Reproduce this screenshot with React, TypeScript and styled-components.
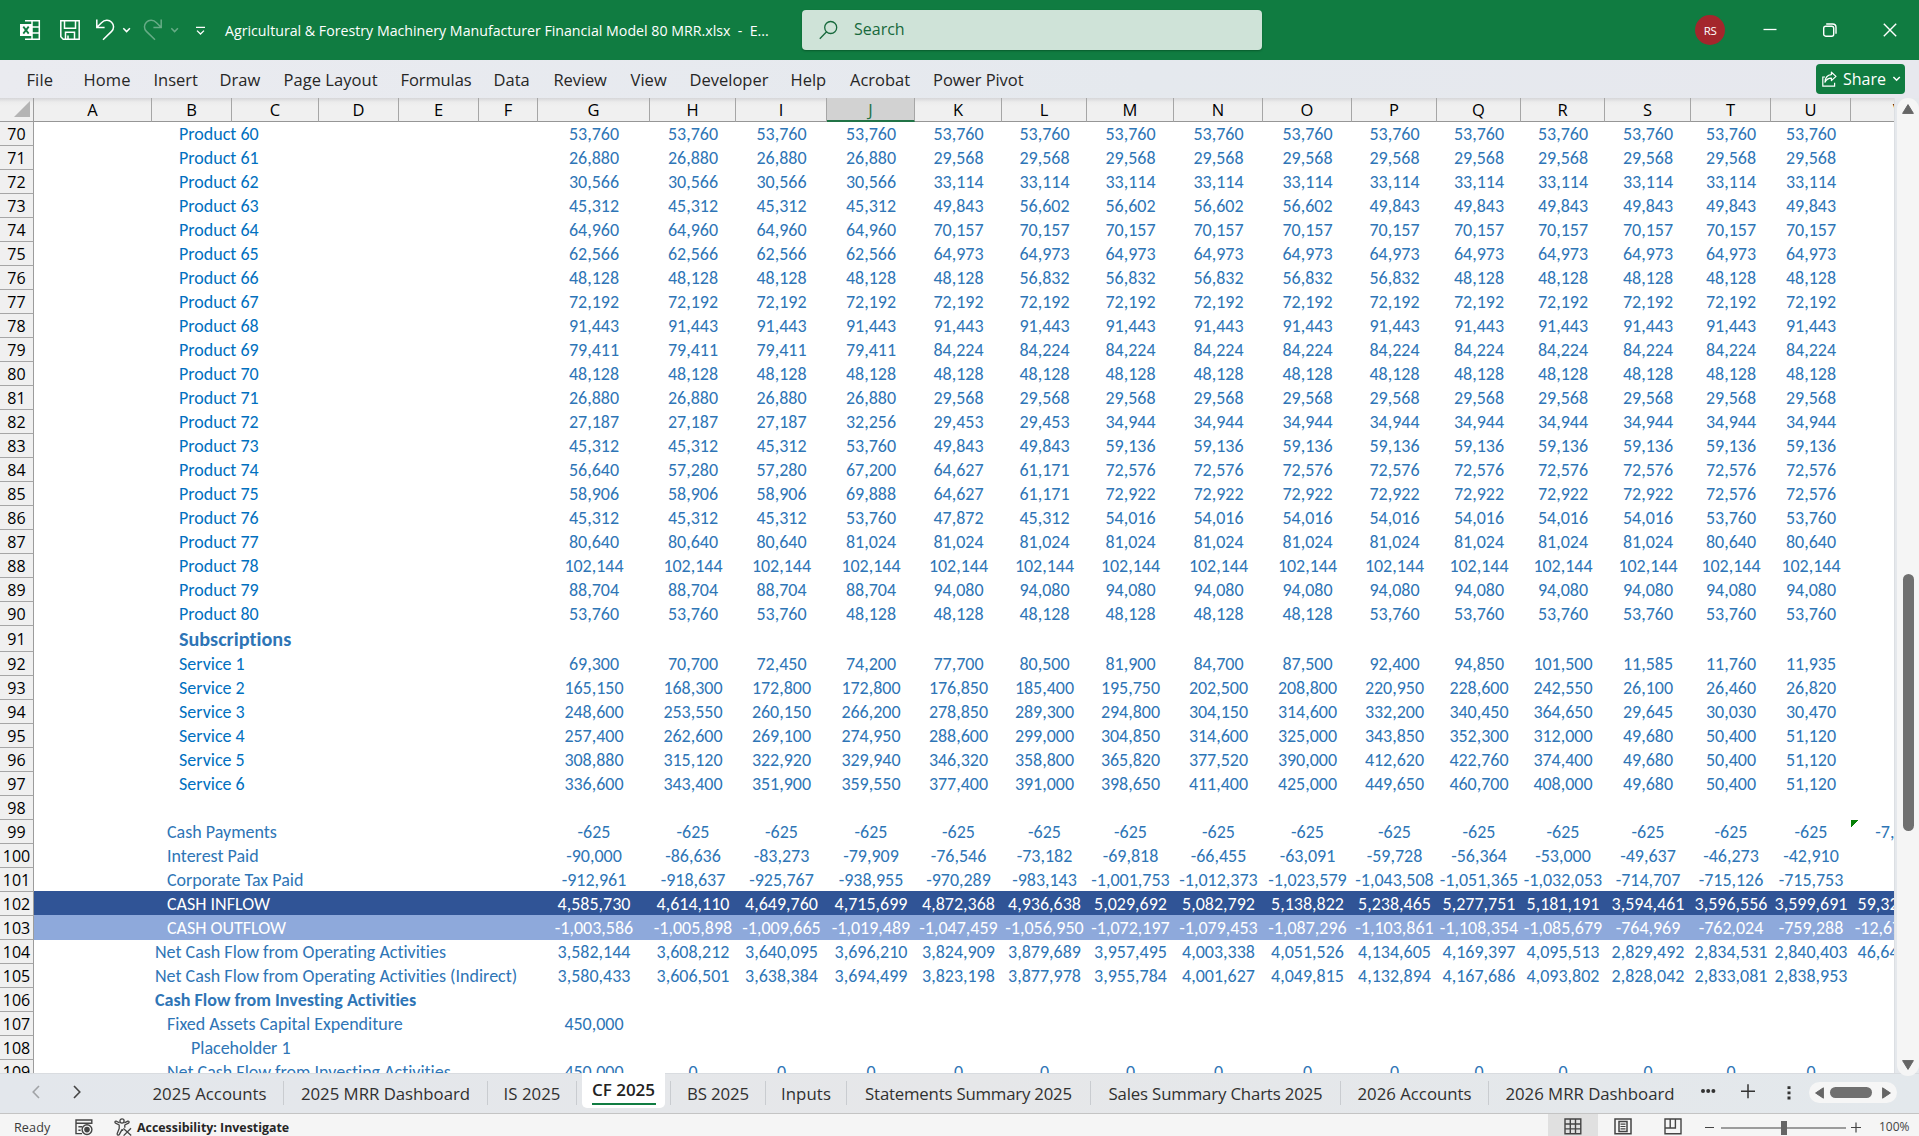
import React from 'react';
import styled, { createGlobalStyle, css } from 'styled-components';

const UI = `"Open Sans", "Noto Sans", sans-serif`;
const CELL = `Calibri, Carlito, Lato, sans-serif`;
const GREEN = '#107c41';

const Global = createGlobalStyle`
  * { box-sizing: border-box; }
  body { margin: 0; font-family: ${UI}; background: #fff; overflow: hidden; }
`;

/* ---------- data ---------- */

const COLUMNS: [string, number][] = [
  ['A', 118], ['B', 80], ['C', 87], ['D', 80], ['E', 80], ['F', 59], ['G', 112], ['H', 86],
  ['I', 91], ['J', 88], ['K', 87], ['L', 85], ['M', 87], ['N', 89], ['O', 89], ['P', 85],
  ['Q', 84], ['R', 84], ['S', 86], ['T', 80], ['U', 80], ['V', 95],
];
const LABEL_WIDTH = 504;
const VALUE_TEMPLATE = COLUMNS.slice(6).map(([, w]) => `${w}px`).join(' ');

type Tone = 'item' | 'line' | 'heading' | 'strong' | 'inflow' | 'outflow';
interface SheetRow { n: number; label: string; indent: number; tone: Tone; values: string[] }

const row = (n: number, label: string, indent: number, tone: Tone, values = ''): SheetRow => ({
  n, label, indent, tone, values: values ? values.split(' ') : [],
});
const same = (v: string, times = 15) => Array(times).fill(v).join(' ');

const PRODUCTS = [
  same('53,760'),
  `${same('26,880', 4)} ${same('29,568', 11)}`,
  `${same('30,566', 4)} ${same('33,114', 11)}`,
  `${same('45,312', 4)} 49,843 ${same('56,602', 4)} ${same('49,843', 6)}`,
  `${same('64,960', 4)} ${same('70,157', 11)}`,
  `${same('62,566', 4)} ${same('64,973', 11)}`,
  `${same('48,128', 5)} ${same('56,832', 5)} ${same('48,128', 5)}`,
  same('72,192'),
  same('91,443'),
  `${same('79,411', 4)} ${same('84,224', 11)}`,
  same('48,128'),
  `${same('26,880', 4)} ${same('29,568', 11)}`,
  `${same('27,187', 3)} 32,256 ${same('29,453', 2)} ${same('34,944', 9)}`,
  `${same('45,312', 3)} 53,760 ${same('49,843', 2)} ${same('59,136', 9)}`,
  `56,640 57,280 57,280 67,200 64,627 61,171 ${same('72,576', 9)}`,
  `${same('58,906', 3)} 69,888 64,627 61,171 ${same('72,922', 7)} ${same('72,576', 2)}`,
  `${same('45,312', 3)} 53,760 47,872 45,312 ${same('54,016', 7)} ${same('53,760', 2)}`,
  `${same('80,640', 3)} ${same('81,024', 10)} ${same('80,640', 2)}`,
  same('102,144'),
  `${same('88,704', 4)} ${same('94,080', 11)}`,
  `${same('53,760', 3)} ${same('48,128', 6)} ${same('53,760', 6)}`,
];

const SERVICES = [
  '69,300 70,700 72,450 74,200 77,700 80,500 81,900 84,700 87,500 92,400 94,850 101,500 11,585 11,760 11,935',
  '165,150 168,300 172,800 172,800 176,850 185,400 195,750 202,500 208,800 220,950 228,600 242,550 26,100 26,460 26,820',
  '248,600 253,550 260,150 266,200 278,850 289,300 294,800 304,150 314,600 332,200 340,450 364,650 29,645 30,030 30,470',
  '257,400 262,600 269,100 274,950 288,600 299,000 304,850 314,600 325,000 343,850 352,300 312,000 49,680 50,400 51,120',
  '308,880 315,120 322,920 329,940 346,320 358,800 365,820 377,520 390,000 412,620 422,760 374,400 49,680 50,400 51,120',
  '336,600 343,400 351,900 359,550 377,400 391,000 398,650 411,400 425,000 449,650 460,700 408,000 49,680 50,400 51,120',
];

const ROWS: SheetRow[] = [
  ...PRODUCTS.map((v, i) => row(70 + i, `Product ${60 + i}`, 27, 'item', v)),
  row(91, 'Subscriptions', 27, 'heading'),
  ...SERVICES.map((v, i) => row(92 + i, `Service ${i + 1}`, 27, 'item', v)),
  row(98, '', 0, 'line'),
  row(99, 'Cash Payments', 15, 'line', `${same('-625')} -7,500`),
  row(100, 'Interest Paid', 15, 'line', '-90,000 -86,636 -83,273 -79,909 -76,546 -73,182 -69,818 -66,455 -63,091 -59,728 -56,364 -53,000 -49,637 -46,273 -42,910'),
  row(101, 'Corporate Tax Paid', 15, 'line', '-912,961 -918,637 -925,767 -938,955 -970,289 -983,143 -1,001,753 -1,012,373 -1,023,579 -1,043,508 -1,051,365 -1,032,053 -714,707 -715,126 -715,753'),
  row(102, 'CASH INFLOW', 15, 'inflow', '4,585,730 4,614,110 4,649,760 4,715,699 4,872,368 4,936,638 5,029,692 5,082,792 5,138,822 5,238,465 5,277,751 5,181,191 3,594,461 3,596,556 3,599,691 59,323,018'),
  row(103, 'CASH OUTFLOW', 15, 'outflow', '-1,003,586 -1,005,898 -1,009,665 -1,019,489 -1,047,459 -1,056,950 -1,072,197 -1,079,453 -1,087,296 -1,103,861 -1,108,354 -1,085,679 -764,969 -762,024 -759,288 -12,679,887'),
  row(104, 'Net Cash Flow from Operating Activities', 3, 'line', '3,582,144 3,608,212 3,640,095 3,696,210 3,824,909 3,879,689 3,957,495 4,003,338 4,051,526 4,134,605 4,169,397 4,095,513 2,829,492 2,834,531 2,840,403 46,643,131'),
  row(105, 'Net Cash Flow from Operating Activities (Indirect)', 3, 'line', '3,580,433 3,606,501 3,638,384 3,694,499 3,823,198 3,877,978 3,955,784 4,001,627 4,049,815 4,132,894 4,167,686 4,093,802 2,828,042 2,833,081 2,838,953'),
  row(106, 'Cash Flow from Investing Activities', 3, 'strong'),
  row(107, 'Fixed Assets Capital Expenditure', 15, 'line', '450,000'),
  row(108, 'Placeholder 1', 39, 'line'),
  row(109, 'Net Cash Flow from Investing Activities', 15, 'line', `450,000 ${same('0', 14)}`),
];

/* label, slot width, letter spacing */
const MENU: [string, number, number][] = [
  ['File', 57, 0.1], ['Home', 70, 0.1], ['Insert', 66, 0], ['Draw', 64, 0], ['Page Layout', 117, 0.05],
  ['Formulas', 93, -0.1], ['Data', 60, 0], ['Review', 77, -0.1], ['View', 59, 0.05], ['Developer', 101, 0],
  ['Help', 59.5, 0], ['Acrobat', 83, 0], ['Power Pivot', 100, -0.05],
];

/* label, slot width including its right-hand divider, letter spacing */
const TABS_BEFORE: [string, number, number][] = [
  ['2025 Accounts', 148, 0], ['2025 MRR Dashboard', 204, -0.02], ['IS 2025', 89, 0.05],
];
const TABS_AFTER: [string, number, number][] = [
  ['BS 2025', 95, -0.1], ['Inputs', 81, 0.1], ['Statements Summary 2025', 244, -0.2],
  ['Sales Summary Charts 2025', 250, -0.15], ['2026 Accounts', 148, 0], ['2026 MRR Dashboard', 203, -0.02],
];

/* ---------- title bar ---------- */

const Window = styled.div`
  width: 1919px;
  height: 1136px;
  display: flex;
  flex-direction: column;
  overflow: hidden;
`;
const TitleBar = styled.header`
  height: 60px;
  flex: none;
  display: flex;
  align-items: center;
  background: ${GREEN};
  color: #fff;
`;
const QuickAccess = styled.div`
  width: 225px;
  height: 100%;
`;
const DocTitle = styled.div`
  width: 577px;
  font-size: 14.2px;
  line-height: 20px;
  white-space: pre;
  padding-top: 1px;
`;
const SearchBox = styled.div`
  width: 460px;
  height: 40px;
  border-radius: 4px;
  background: #cfe3d8;
  color: #17693c;
  display: flex;
  align-items: center;
  gap: 16px;
  padding: 0 0 1px 17px;
  font-size: 16px;
  line-height: 22px;
  box-shadow: 0 1px 2px rgba(0, 50, 20, 0.45);
`;
const SearchLabel = styled.span`
  padding-bottom: 1px;
`;
const Avatar = styled.div`
  width: 30px;
  height: 30px;
  border-radius: 50%;
  margin-left: 433px;
  background: #a4262c;
  display: grid;
  place-items: center;
  font-size: 11.5px;
  letter-spacing: -0.4px;
`;
const WindowButtons = styled.div`
  display: flex;
  align-items: center;
  gap: 44px;
  margin-left: 37px;
`;

/* ---------- ribbon tabs ---------- */

const MenuBar = styled.nav`
  height: 38px;
  flex: none;
  display: flex;
  align-items: center;
  padding: 0 14px 0 26.5px;
  background: linear-gradient(90deg, #eaebf0, #e5e9ee 60%, #e7e8ee);
`;
const MenuItem = styled.span<{ $w: number; $ls: number }>`
  width: ${(p) => p.$w}px;
  white-space: nowrap;
  font-size: 16.5px;
  line-height: 22px;
  padding-top: 1px;
  letter-spacing: ${(p) => p.$ls}px;
  color: #262626;
`;
const ShareButton = styled.div`
  margin: 0 0 0 auto;
  width: 89px;
  height: 30px;
  border-radius: 4px;
  background: ${GREEN};
  color: #fff;
  display: flex;
  align-items: center;
  padding-left: 6px;
  font-size: 16px;
  line-height: 22px;
  gap: 6px;
`;

/* ---------- sheet ---------- */

const SheetArea = styled.main`
  height: 975px;
  flex: none;
  display: flex;
  background: #e5e8ec;
`;
const Sheet = styled.section`
  width: 1895px;
  overflow: hidden;
  background: #fff;
  border-right: 1px solid #dcdfe3;
`;
const HeaderRow = styled.div`
  display: flex;
  width: 1950px;
  height: 24px;
  background: linear-gradient(#d6d6d8, #ececec 4px, #f0f0f0 8px);
`;
const Corner = styled.div`
  width: 34px;
  flex: none;
  border-right: 1px solid #9c9c9c;
  border-bottom: 1px solid #9c9c9c;
  display: flex;
  align-items: flex-end;
  justify-content: flex-end;
  padding: 0 3px 4px 0;
`;
const ColumnHeader = styled.div<{ $w: number; $active?: boolean }>`
  width: ${(p) => p.$w}px;
  flex: none;
  text-align: center;
  font-size: 16.5px;
  line-height: 24px;
  color: #000;
  border-right: 1px solid #a6a6a6;
  border-bottom: 1px solid #969696;
  ${(p) => p.$active && css`
    background: #d2d2d2;
    color: #217346;
    border-bottom: 2px solid #217346;
  `}
`;
const Line = styled.div<{ $tall: boolean }>`
  display: flex;
  width: 1950px;
  height: ${(p) => (p.$tall ? 26 : 24)}px;
  line-height: ${(p) => (p.$tall ? 26 : 24)}px;
`;
const RowNumber = styled.div`
  width: 34px;
  flex: none;
  background: #f0f0f0;
  border-right: 1px solid #9c9c9c;
  border-bottom: 1px solid #a6a6a6;
  text-align: center;
  font-size: 16px;
  color: #000;
`;
const TONES: Record<Tone, ReturnType<typeof css>> = {
  item: css`color: #2e75b6;`,
  line: css`color: #2e75b6;`,
  heading: css`color: #2e75b6; font-weight: 700; font-size: 20.2px; line-height: 27px;`,
  strong: css`color: #2e75b6; font-weight: 700; font-size: 18.1px;`,
  inflow: css`color: #fff; background: #305496; box-shadow: 0 -1px #305496;`,
  outflow: css`color: #fff; background: #8ea9db; box-shadow: 0 -1px #8ea9db;`,
};
const Cells = styled.div<{ $tone: Tone }>`
  display: flex;
  font-family: ${CELL};
  font-size: 18px;
  line-height: 25px;
  font-variant-ligatures: none;
  white-space: nowrap;
  ${(p) => TONES[p.$tone]}
`;
const Label = styled.div<{ $indent: number; $item: boolean }>`
  width: ${LABEL_WIDTH}px;
  padding-left: ${(p) => 118 + p.$indent}px;
  ${(p) => p.$item && css`color: #0070c0;`}
`;
const Values = styled.div`
  display: grid;
  grid-template-columns: ${VALUE_TEMPLATE};
`;
const Value = styled.div`
  display: flex;
  justify-content: center;
  min-width: 0;
`;
const FlaggedValue = styled(Value)`
  background: linear-gradient(135deg, #078007 5px, transparent 5px) no-repeat 0 0;
`;

const VScroll = styled.div`
  margin-left: 2px;
  width: 22px;
  height: 978px;
  border-radius: 11px;
  background: #f5f5f5;
  display: flex;
  flex-direction: column;
  align-items: center;
  padding: 6px 0;
  position: relative;
`;
const VThumb = styled.div`
  width: 11px;
  height: 257px;
  margin: 460px 0 auto;
  border-radius: 5.5px;
  background: #707070;
`;

/* ---------- sheet tabs ---------- */

const TabBar = styled.div`
  height: 41px;
  flex: none;
  display: flex;
  background: linear-gradient(90deg, #e3e7ec, #e6e7e9 50%, #e3e8ec);
  border-bottom: 1px solid #c4c4c4;
  border-top: 1px solid #d9dce0;
`;
const TabNav = styled.div`
  width: 136px;
  display: flex;
  align-items: center;
  gap: 33px;
  padding: 0 0 3px 31.5px;
`;
const Tab = styled.div<{ $w: number; $ls: number; $last?: boolean }>`
  width: ${(p) => p.$w}px;
  height: 24px;
  margin-top: 7px;
  flex: none;
  text-align: center;
  white-space: nowrap;
  font-size: 16.8px;
  line-height: 25px;
  letter-spacing: ${(p) => p.$ls}px;
  color: #303030;
  border-right: 1px solid ${(p) => (p.$last ? 'transparent' : '#c9ccd0')};
`;
const ActiveTab = styled.div`
  width: 83px;
  height: 35px;
  margin: -1px 5px 0;
  flex: none;
  border-radius: 0 0 5px 5px;
  background: #fff;
  display: flex;
  flex-direction: column;
  align-items: center;
  font-size: 17px;
  font-weight: 600;
  line-height: 24px;
  padding-top: 5px;
  color: #222;
`;
const Underline = styled.div`
  width: 64px;
  height: 2px;
  margin-top: 1px;
  background: ${GREEN};
`;
const TabTools = styled.div`
  display: flex;
  align-items: center;
  padding: 0 0 3px 9px;
`;
const HScroll = styled.div`
  width: 88px;
  height: 21px;
  margin: 1px 0 0 12px;
  border-radius: 11px;
  background: #f6f6f6;
  display: flex;
  align-items: center;
  justify-content: space-between;
  padding: 0 6px;
`;
const HThumb = styled.div`
  width: 42px;
  height: 11px;
  margin-right: 4px;
  border-radius: 5.5px;
  background: #707070;
`;

/* ---------- status bar ---------- */

const StatusBar = styled.footer`
  height: 22px;
  flex: none;
  display: flex;
  align-items: center;
  background: #f5f5f5;
  color: #3a3a3a;
  font-size: 12.6px;
  line-height: 16px;
  padding-top: 5px;
`;
const Ready = styled.span`
  width: 61px;
  margin-left: 14px;
  letter-spacing: 0.1px;
`;
const AccessText = styled.span`
  margin-left: 4px;
  font-size: 12.4px;
  font-weight: 700;
  color: #262626;
`;
const ViewButtons = styled.div`
  display: flex;
  height: 22px;
  margin: -5px 0 0 auto;
`;
const ViewButton = styled.div<{ $active?: boolean }>`
  width: 50px;
  display: grid;
  place-items: center;
  padding-top: 2px;
  background: ${(p) => (p.$active ? '#e0e0e0' : 'transparent')};
`;
const Zoom = styled.div`
  display: flex;
  align-items: center;
  margin: -5px 0 0 6px;
  height: 22px;
  padding-top: 3px;
`;
const Percent = styled.span`
  width: 40px;
  margin-left: 18px;
  padding-top: 1px;
  font-size: 12px;
  color: #444;
`;

/* ---------- icons ---------- */

const QuickIcons = () => (
  <svg width="225" height="60" fill="none" stroke="#fff" strokeWidth="1.5">
    <path d="M25 20.8H39.3V39.2H25M25 26.9H39M25 33.1H39M32 20.8V39.2" />
    <rect x="20" y="24" width="12" height="12" fill="#fff" stroke="none" />
    <path d="M23.3 26.6 28.7 33.6M28.7 26.6 23.3 33.6" stroke={GREEN} strokeWidth="1.8" />
    <path d="M60.8 20.8H79.2V39.2H63.2L60.8 36.8ZM64.5 20.8V28.2H75.5V20.8M65.5 39.2V32.2H74.5V39.2M68 35.5V39" />
    <path d="M96.8 19.6V27.4H104.6M97.2 27 101.5 22.7C104.5 19.7 109 19.6 111.6 22.2S114.2 28.8 111.6 31.4L103 39.8" />
    <path d="M123.3 28.2 126.6 31.6 129.9 28.2" />
    <g opacity="0.36">
      <path d="M161.2 19.6V27.4H153.4M160.8 27 156.5 22.7C153.5 19.7 149 19.6 146.4 22.2S143.8 28.8 146.4 31.4L155 39.8" />
      <path d="M171.3 28.2 174.6 31.6 177.9 28.2" />
    </g>
    <path d="M196 27.3H205M197 30.6 200.5 34 204 30.6" strokeWidth="1.3" />
  </svg>
);

const SearchIcon = () => (
  <svg width="19" height="20" fill="none" stroke="#17693c" strokeWidth="1.3">
    <circle cx="11.7" cy="7.5" r="6" />
    <path d="M7.6 11.8 0.8 18.8" />
  </svg>
);

const ShareIcon = () => (
  <svg width="15" height="16" fill="none" stroke="#fff" strokeWidth="1.2">
    <path d="M3 6H0.8V15.2H12.6V11.8" />
    <path d="M9.4 1.2 14 5.4 9.4 9.6V7.2C6.6 7.1 4.4 8.6 3 11.2 3.2 7 5.6 3.8 9.4 3.6Z" strokeLinejoin="round" />
  </svg>
);

const MacroIcon = () => (
  <svg width="19" height="17" fill="none" stroke="#444" strokeWidth="1.4">
    <path d="M16.8 5V1H1V14.6H7M1 4.2H16.8M3.4 7.8H7.4M3.4 11.2H5.6" />
    <circle cx="12" cy="10.6" r="4.9" />
    <circle cx="12" cy="10.6" r="2.1" fill="#444" />
  </svg>
);

const AccessIcon = () => (
  <svg width="19" height="19" fill="none" stroke="#444" strokeWidth="1.3" strokeLinejoin="round">
    <circle cx="8" cy="3" r="2.1" />
    <path d="M5.6 4.9 2.4 3.2C1 2.8 0.4 4.4 1.6 5.2L5.2 7V10.4L3.2 15.6C3 17.4 4.8 17.6 5.4 16.4L8 11.6 9.2 12.6M10.4 4.9 13.8 3.2C15.2 2.8 15.6 4.4 14.4 5.2L10.8 7V9.8" />
    <path d="M9.4 10.4 17.2 17.4M17 10.2 9.6 17.6" />
  </svg>
);

const GridIcon = () => (
  <svg width="18" height="17" fill="none" stroke="#444" strokeWidth="1.4">
    <path d="M1 1H16.8V15.8H1ZM1 6H16.8M1 10.9H16.8M6.3 1V15.8M11.5 1V15.8" />
  </svg>
);
const PageIcon = () => (
  <svg width="18" height="17" fill="none" stroke="#444" strokeWidth="1.5">
    <path d="M1 1H17V15.8H1ZM5 3.6H13V13.4H5Z" />
    <path d="M6.5 6.1H11.5M6.5 8.5H11.5M6.5 10.9H11.5" strokeWidth="1.2" />
  </svg>
);
const BreakIcon = () => (
  <svg width="18" height="17" fill="none" stroke="#444" strokeWidth="1.4">
    <path d="M1 1H17V15.8H1ZM6.2 1V10M11.4 1V10H1" />
  </svg>
);

export default function App() {
  return (
    <>
      <Global />
      <Window>
        <TitleBar>
          <QuickAccess><QuickIcons /></QuickAccess>
          <DocTitle>{'Agricultural & Forestry Machinery Manufacturer Financial Model 80 MRR.xlsx  -  E...'}</DocTitle>
          <SearchBox><SearchIcon /><SearchLabel>Search</SearchLabel></SearchBox>
          <Avatar>RS</Avatar>
          <WindowButtons>
            <svg width="16" height="16" stroke="#fff" strokeWidth="1.3"><path d="M1.5 7.5H14.5" /></svg>
            <svg width="16" height="16" fill="none" stroke="#fff" strokeWidth="1.4">
              <rect x="1.7" y="4.2" width="10" height="10" rx="2" />
              <path d="M4.2 2H10.6A3.4 3.4 0 0 1 14 5.4V11.8" />
            </svg>
            <svg width="16" height="16" stroke="#fff" strokeWidth="1.4"><path d="M1.8 1.8 14.2 14.2M14.2 1.8 1.8 14.2" /></svg>
          </WindowButtons>
        </TitleBar>

        <MenuBar>
          {MENU.map(([t, w, ls]) => <MenuItem key={t} $w={w} $ls={ls}>{t}</MenuItem>)}
          <ShareButton>
            <ShareIcon />Share
            <svg width="9" height="8" fill="none" stroke="#fff" strokeWidth="1.5"><path d="M1.4 2 4.6 5.2 7.8 2" /></svg>
          </ShareButton>
        </MenuBar>

        <SheetArea>
          <Sheet>
            <HeaderRow>
              <Corner><svg width="16" height="16"><path d="M16 0V16H0Z" fill="#b4b4b4" /></svg></Corner>
              {COLUMNS.map(([c, w]) => <ColumnHeader key={c} $w={w} $active={c === 'J'}>{c}</ColumnHeader>)}
            </HeaderRow>
            {ROWS.map((r) => (
              <Line key={r.n} $tall={r.tone === 'heading'}>
                <RowNumber>{r.n}</RowNumber>
                <Cells $tone={r.tone}>
                  <Label $indent={r.indent} $item={r.tone === 'item'}>{r.label}</Label>
                  <Values>
                    {r.values.map((v, i) => (r.n === 99 && i === 15
                      ? <FlaggedValue key={i}>{v}</FlaggedValue>
                      : <Value key={i}>{v}</Value>))}
                  </Values>
                </Cells>
              </Line>
            ))}
          </Sheet>
          <VScroll>
            <svg width="12" height="10"><path d="M6 0.6 11.4 9.4H0.6Z" fill="#666" stroke="#666" strokeLinejoin="round" /></svg>
            <VThumb />
            <svg width="12" height="10"><path d="M6 9.4 11.4 0.6H0.6Z" fill="#666" stroke="#666" strokeLinejoin="round" /></svg>
          </VScroll>
        </SheetArea>

        <TabBar>
          <TabNav>
            <svg width="8" height="14" fill="none" stroke="#a0a3a6" strokeWidth="1.6"><path d="M7 1 1.2 7 7 13" /></svg>
            <svg width="8" height="14" fill="none" stroke="#444" strokeWidth="1.6"><path d="M1 1 6.8 7 1 13" /></svg>
          </TabNav>
          {TABS_BEFORE.map(([t, w, ls]) => <Tab key={t} $w={w} $ls={ls}>{t}</Tab>)}
          <ActiveTab>CF 2025<Underline /></ActiveTab>
          <Tab $w={1} $ls={0} />
          {TABS_AFTER.map(([t, w, ls], i) => <Tab key={t} $w={w} $ls={ls} $last={i === TABS_AFTER.length - 1}>{t}</Tab>)}
          <TabTools>
            <svg width="96" height="24" fill="#333">
              <circle cx="2" cy="11" r="2" /><circle cx="7.2" cy="11" r="2" /><circle cx="12.4" cy="11" r="2" />
              <path d="M40 11.2H54M47 4.2V18.2" stroke="#333" strokeWidth="1.5" />
              <path d="M86.5 6.2H89.5V9H86.5ZM86.5 11.4H89.5V14.2H86.5ZM86.5 16.6H89.5V19.4H86.5Z" />
            </svg>
            <HScroll>
              <svg width="9" height="12"><path d="M0.6 6 8.4 0.8V11.2Z" fill="#666" stroke="#666" strokeLinejoin="round" /></svg>
              <HThumb />
              <svg width="9" height="12"><path d="M8.4 6 0.6 0.8V11.2Z" fill="#666" stroke="#666" strokeLinejoin="round" /></svg>
            </HScroll>
          </TabTools>
        </TabBar>

        <StatusBar>
          <Ready>Ready</Ready>
          <MacroIcon />
          <svg width="20" height="2" />
          <AccessIcon />
          <AccessText>Accessibility: Investigate</AccessText>
          <ViewButtons>
            <ViewButton $active><GridIcon /></ViewButton>
            <ViewButton><PageIcon /></ViewButton>
            <ViewButton><BreakIcon /></ViewButton>
          </ViewButtons>
          <Zoom>
            <svg width="157" height="18" stroke="#444" fill="none" strokeWidth="1.2">
              <path d="M1 9.5H10M17 10H142M147 9.5H157M152 4.5V14.5" />
              <rect x="77" y="3" width="6" height="14" fill="#666" stroke="none" />
            </svg>
            <Percent>100%</Percent>
          </Zoom>
        </StatusBar>
      </Window>
    </>
  );
}
